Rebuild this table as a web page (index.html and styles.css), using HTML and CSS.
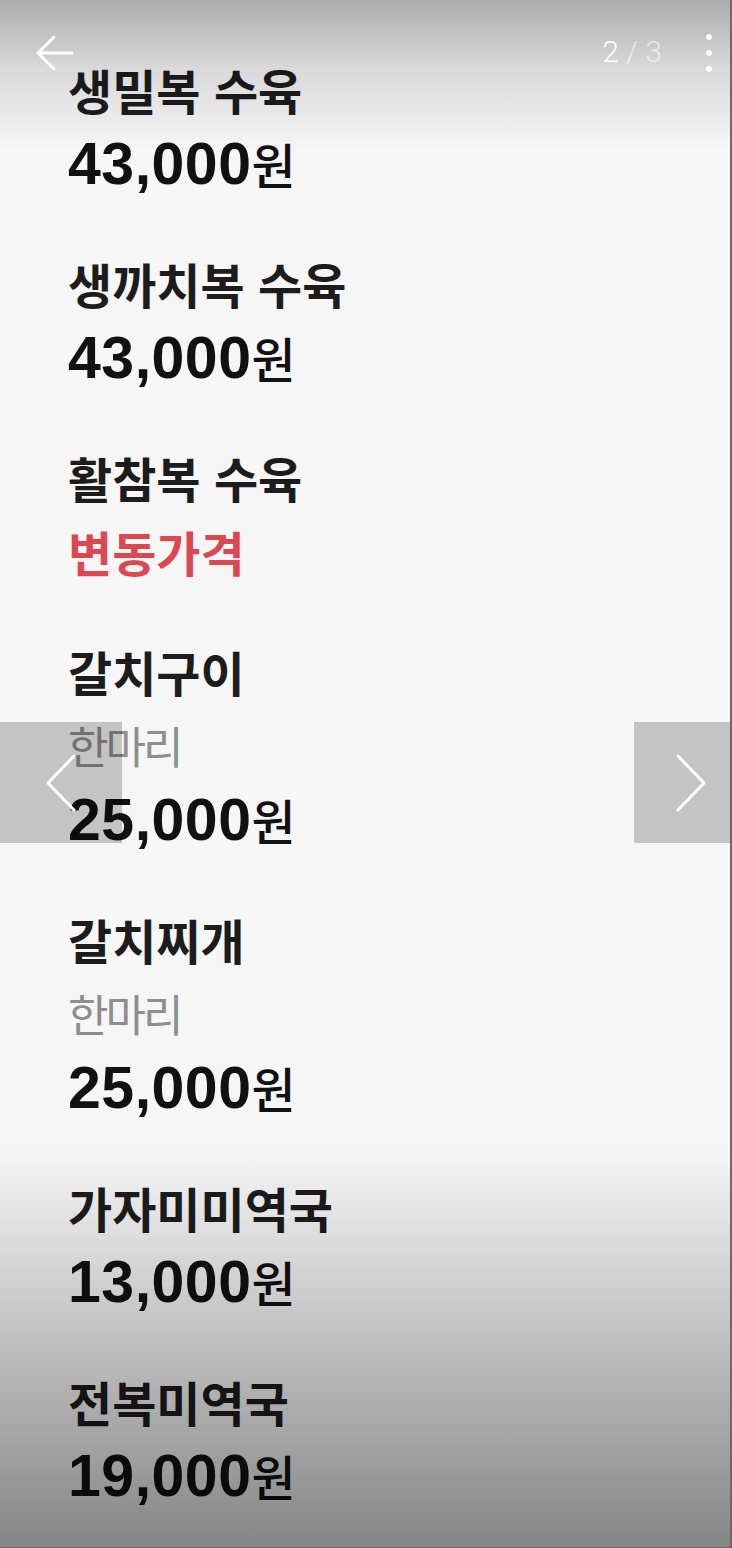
FILE: index.html
```html
<!DOCTYPE html>
<html lang="ko">
<head>
    <meta charset="UTF-8">
    <meta name="viewport" content="width=device-width, initial-scale=1.0">
    <title>사진 2 / 3</title>
    <link rel="stylesheet" href="styles.css">
</head>
<body>

    <div class="viewer">
        <div class="menu-list">
            <div class="menu-item">
                <p class="menu-name">생밀복 수육</p>
                <p class="menu-price">43,000<span class="unit">원</span></p>
            </div>
            <div class="menu-item">
                <p class="menu-name">생까치복 수육</p>
                <p class="menu-price">43,000<span class="unit">원</span></p>
            </div>
            <div class="menu-item">
                <p class="menu-name">활참복 수육</p>
                <p class="menu-price market">변동가격</p>
            </div>
            <div class="menu-item">
                <p class="menu-name">갈치구이</p>
                <p class="menu-option">한마리</p>
                <p class="menu-price">25,000<span class="unit">원</span></p>
            </div>
            <div class="menu-item">
                <p class="menu-name">갈치찌개</p>
                <p class="menu-option">한마리</p>
                <p class="menu-price">25,000<span class="unit">원</span></p>
            </div>
            <div class="menu-item">
                <p class="menu-name">가자미미역국</p>
                <p class="menu-price">13,000<span class="unit">원</span></p>
            </div>
            <div class="menu-item">
                <p class="menu-name">전복미역국</p>
                <p class="menu-price">19,000<span class="unit">원</span></p>
            </div>
        </div>

        <!-- overlays -->
        <div class="shade-top"></div>
        <div class="shade-bottom"></div>

        <div class="top-bar">
            <button class="icon-btn back-btn" aria-label="뒤로">
                <svg width="48" height="40" viewBox="0 0 48 40">
                    <path d="M42 20 H9 M24 4 L8 20 L24 36" fill="none" stroke="#fff" stroke-width="3" stroke-linecap="round" stroke-linejoin="round"/>
                </svg>
            </button>
            <div class="counter"><span class="current">2</span> / 3</div>
            <button class="icon-btn more-btn" aria-label="더보기">
                <span class="dot"></span>
                <span class="dot"></span>
                <span class="dot"></span>
            </button>
        </div>

        <button class="nav-btn prev-btn" aria-label="이전">
            <svg width="40" height="60" viewBox="0 0 40 60">
                <path d="M29 3 L3 30 L29 57" fill="none" stroke="#fff" stroke-width="3" stroke-linecap="round" stroke-linejoin="round"/>
            </svg>
        </button>
        <button class="nav-btn next-btn" aria-label="다음">
            <svg width="40" height="60" viewBox="0 0 40 60">
                <path d="M11 3 L37 30 L11 57" fill="none" stroke="#fff" stroke-width="3" stroke-linecap="round" stroke-linejoin="round"/>
            </svg>
        </button>
    </div>

</body>
</html>
```

FILE: styles.css
```css
body {
    margin: 0;
    background-color: #333;
    font-family: "Noto Sans CJK KR", "Noto Sans", sans-serif;
}
.viewer {
    position: relative;
    width: 730px;
    height: 1547px;
    overflow: hidden;
    background-color: #f6f6f6;
    border-right: 2px solid #6a6a6a;
    border-bottom: 1px solid #6a6a6a;
}
.menu-list {
    padding: 52px 0 0 68px;
}
.menu-item {
    margin-bottom: 46px;
}
.menu-item p {
    margin: 0;
    height: 74px;
    line-height: 74px;
    white-space: nowrap;
}
.menu-name {
    font-size: 48px;
    font-weight: 700;
    color: #1c1c1c;
}
.menu-option {
    font-size: 44px;
    font-weight: 400;
    letter-spacing: -3px;
    color: #8e8e8e;
}
.menu-price {
    font-family: "Liberation Sans", "Noto Sans CJK KR", sans-serif;
    font-size: 59px;
    font-weight: 700;
    letter-spacing: 0.5px;
    color: #111;
}
.menu-price .unit {
    font-family: "Noto Sans CJK KR", sans-serif;
    font-size: 48px;
    font-weight: 500;
    letter-spacing: 0;
}
.menu-price.market {
    font-family: "Noto Sans CJK KR", sans-serif;
    font-size: 48px;
    letter-spacing: 0;
    color: #dc4852;
}
.shade-top {
    position: absolute;
    top: 0;
    left: 0;
    right: 0;
    height: 150px;
    background: linear-gradient(rgba(0, 0, 0, 0.3), rgba(0, 0, 0, 0.12) 45%, rgba(0, 0, 0, 0));
}
.shade-bottom {
    position: absolute;
    left: 0;
    right: 0;
    bottom: 0;
    height: 400px;
    background: linear-gradient(rgba(0, 0, 0, 0), rgba(0, 0, 0, 0.46));
}
.top-bar {
    position: absolute;
    top: 0;
    left: 0;
    right: 0;
    height: 100px;
    display: flex;
    align-items: flex-start;
}
.icon-btn {
    background: none;
    border: none;
    padding: 0;
    cursor: pointer;
}
.back-btn {
    margin: 33px 0 0 30px;
}
.counter {
    margin: 32px 0 0 auto;
    font-family: Roboto, sans-serif;
    font-weight: 300;
    font-size: 30px;
    line-height: 40px;
    color: rgba(255, 255, 255, 0.6);
}
.counter .current {
    color: #fff;
}
.more-btn {
    margin: 34px 16px 0 42px;
    width: 10px;
    display: flex;
    flex-direction: column;
    align-items: center;
    gap: 10px;
}
.dot {
    width: 6px;
    height: 6px;
    border-radius: 50%;
    background-color: rgba(255, 255, 255, 0.9);
}
.nav-btn {
    position: absolute;
    top: 722px;
    height: 121px;
    border: none;
    padding: 0;
    background-color: rgba(0, 0, 0, 0.2);
    display: flex;
    align-items: center;
    cursor: pointer;
}
.prev-btn {
    left: 0;
    width: 122px;
    padding-left: 45px;
}
.next-btn {
    right: 0;
    width: 96px;
    padding-left: 33px;
}
```
